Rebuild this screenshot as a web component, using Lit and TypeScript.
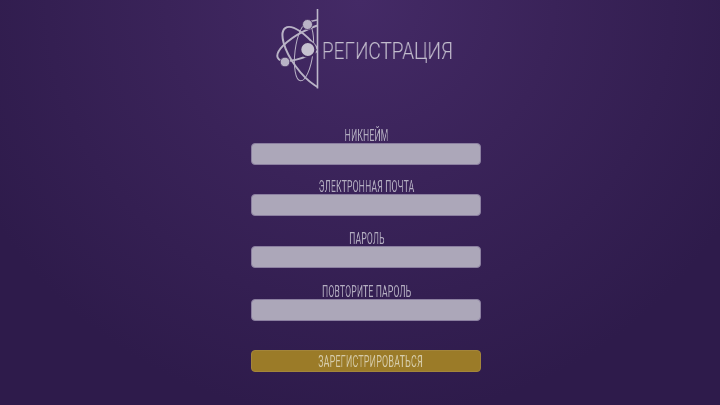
import { LitElement, html, css } from "lit";
import { customElement } from "lit/decorators.js";

const FIELDS = [
  { text: "НИКНЕЙМ", gap: 13 },
  { text: "ЭЛЕКТРОННАЯ ПОЧТА", gap: 14 },
  { text: "ПАРОЛЬ", gap: 15 },
  { text: "ПОВТОРИТЕ ПАРОЛЬ", gap: 0 },
];

@customElement("app-root")
export class AppRoot extends LitElement {
  static styles = css`
    :host {
      display: block;
      width: 720px;
      height: 405px;
      overflow: hidden;
      background: radial-gradient(ellipse 430px 420px at 360px 0px, #442a66 0%, #3a2359 45%, #2e1b4b 100%);
      font-family: "Roboto", sans-serif;
    }
    .page { display: flex; flex-direction: column; padding-top: 8px; }
    .brand { display: flex; align-items: center; margin-left: 274px; height: 82px; }
    .brand svg { display: block; flex: none; }
    .title {
      margin: 4px 0 0 2px;
      font-weight: 300;
      font-size: 24px;
      line-height: 24px;
      color: #c2bccd;
      white-space: nowrap;
      display: inline-block;
      transform: scaleX(0.79);
      transform-origin: left center;
      will-change: transform;
    }
    form { display: flex; flex-direction: column; width: 230px; margin: 37px 0 0 251px; }
    .label {
      height: 16px;
      display: flex;
      justify-content: center;
      align-items: center;
      font-size: 16px;
      color: #b3adc0;
      white-space: nowrap;
    }
    .label span {
      display: inline-block;
      letter-spacing: 0.3px;
      transform: translateX(1px) scaleX(0.54);
      will-change: transform;
    }
    .field { display: flex; flex-direction: column; }
    .input {
      height: 22px;
      box-sizing: border-box;
      border: 1px solid #8b7fa0;
      border-radius: 4px;
      background: #aca7b9;
    }
    .btn {
      margin-top: 29px;
      height: 22px;
      box-sizing: border-box;
      border: 1px solid #a3853a;
      border-radius: 4px;
      background: #9b7b28;
      color: #d6ccaa;
      font-size: 16px;
      display: flex;
      align-items: center;
      justify-content: center;
      white-space: nowrap;
    }
    .btn span {
      display: inline-block;
      letter-spacing: 0.3px;
      transform: translateX(4px) scaleX(0.56);
      will-change: transform;
    }
  `;

  render() {
    return html`
      <div class="page">
        <div class="brand">
          <svg width="46" height="82" viewBox="274 8 46 82" fill="none" stroke="#b9b3c6">
            <defs><clipPath id="c"><rect x="270" y="0" width="47" height="100"></rect></clipPath></defs>
            <g clip-path="url(#c)">
              <ellipse cx="307" cy="58" rx="37" ry="14" transform="rotate(54 307 58)" stroke-width="2"></ellipse>
              <ellipse cx="309" cy="42" rx="35" ry="12" transform="rotate(-27 309 42)" stroke-width="2"></ellipse>
              <ellipse cx="304" cy="52" rx="29" ry="9" transform="rotate(97 304 52)" stroke-width="1"></ellipse>
            </g>
            <path d="M308 22 L317 20" stroke-width="1.4"></path>
            <circle cx="307.500" cy="24.500" r="5" fill="#b9b3c6" stroke="#42295f" stroke-width="0.8"></circle>
            <circle cx="285" cy="62" r="4.800" fill="#b9b3c6" stroke="#42295f" stroke-width="0.8"></circle>
            <circle cx="307.800" cy="49.500" r="7.500" fill="#c6c1d0" stroke="#42295f" stroke-width="2"></circle>
            <path d="M317.500 9 V88.500" stroke="#bdb7ca" stroke-width="1.6"></path>
          </svg>
          <span class="title">РЕГИСТРАЦИЯ</span>
        </div>
        <form>
          ${FIELDS.map(
            (f) => html`
              <div class="field" style="margin-bottom:${f.gap}px">
                <div class="label"><span>${f.text}</span></div>
                <div class="input"></div>
              </div>
            `
          )}
          <div class="btn"><span>ЗАРЕГИСТРИРОВАТЬСЯ</span></div>
        </form>
      </div>
    `;
  }
}
